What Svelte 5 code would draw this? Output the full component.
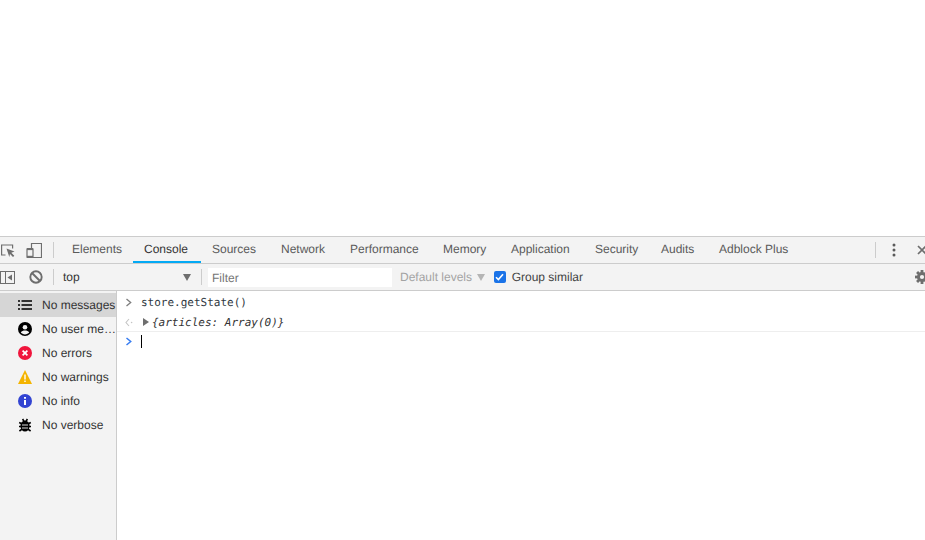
<script>
  const tabs = [
    { name: 'Elements', width: 72 },
    { name: 'Console', width: 68 },
    { name: 'Sources', width: 69 },
    { name: 'Network', width: 69 },
    { name: 'Performance', width: 93 },
    { name: 'Memory', width: 68 },
    { name: 'Application', width: 84 },
    { name: 'Security', width: 66 },
    { name: 'Audits', width: 58 },
    { name: 'Adblock Plus', width: 95 }
  ];
  const levels = [
    { label: 'No messages', icon: 'list', active: true },
    { label: 'No user me…', icon: 'user' },
    { label: 'No errors', icon: 'error' },
    { label: 'No warnings', icon: 'warning' },
    { label: 'No info', icon: 'info' },
    { label: 'No verbose', icon: 'bug' }
  ];
  const gearTeeth = [0, 45, 90, 135];
</script>

<div class="page">
  <div class="blank"></div>
  <div class="devtools">
    <div class="tabbar">
      <div class="tool-icons">
        <svg class="inspect" width="16" height="16" viewBox="0 0 16 16">
          <path d="M5.5 13H1.6V3h11v3.5" fill="none" stroke="#6e6e6e" stroke-width="1.2"/>
          <path d="M6.5 6.5l8 3-3.2 1.2 3 3-1.3 1.3-3-3L9.3 15z" fill="#6e6e6e"/>
        </svg>
        <svg class="device" width="16" height="16" viewBox="0 0 16 16">
          <path d="M5.5 6V1.5h10v14H6" fill="none" stroke="#6e6e6e" stroke-width="1.2"/>
          <rect x="1" y="6.5" width="6" height="9" rx="0.5" fill="none" stroke="#6e6e6e" stroke-width="1.2"/>
          <rect x="1" y="6.5" width="6" height="1.6" fill="#6e6e6e"/>
          <rect x="1" y="13.8" width="6" height="1.6" fill="#6e6e6e"/>
        </svg>
      </div>
      <span class="sep"></span>
      <div class="tabs">
        {#each tabs as tab}
          <div class="tab" class:selected={tab.name === 'Console'} style="width: {tab.width}px">{tab.name}</div>
        {/each}
      </div>
      <div class="tab-end">
        <span class="sep"></span>
        <svg class="dots" width="4" height="14" viewBox="0 0 4 14">
          <circle cx="2" cy="2" r="1.5" fill="#5a5a5a"/>
          <circle cx="2" cy="7" r="1.5" fill="#5a5a5a"/>
          <circle cx="2" cy="12" r="1.5" fill="#5a5a5a"/>
        </svg>
        <svg class="close" width="10" height="10" viewBox="0 0 10 10">
          <path d="M1 1l8 8M9 1l-8 8" stroke="#6e6e6e" stroke-width="1.7"/>
        </svg>
      </div>
    </div>

    <div class="toolbar">
      <svg class="sidebar-toggle" width="15" height="13" viewBox="0 0 15 13">
        <rect x="0.5" y="0.5" width="14" height="12" fill="none" stroke="#6e6e6e"/>
        <path d="M5.5 0v13" stroke="#6e6e6e"/>
        <path d="M12 3.5v6L7.5 6.5z" fill="#6e6e6e"/>
      </svg>
      <svg class="clear" width="14" height="14" viewBox="0 0 14 14">
        <circle cx="7" cy="7" r="5.7" fill="none" stroke="#6e6e6e" stroke-width="1.9"/>
        <path d="M3 3l8 8" stroke="#6e6e6e" stroke-width="1.9"/>
      </svg>
      <span class="sep first-sep"></span>
      <div class="context">
        <span>top</span>
        <span class="arrow"></span>
      </div>
      <span class="sep"></span>
      <div class="filter">Filter</div>
      <div class="default-levels">Default levels <span class="arrow light"></span></div>
      <label class="group">
        <span class="check">
          <svg width="9" height="8" viewBox="0 0 9 8"><path d="M1 4.2l2.4 2.4L8 1.2" fill="none" stroke="#fff" stroke-width="1.6"/></svg>
        </span>
        Group similar
      </label>
      <svg class="gear" width="14" height="14" viewBox="0 0 14 14">
        {#each gearTeeth as angle}
          <rect x="5.6" y="0" width="2.8" height="14" fill="#6e6e6e" transform="rotate({angle} 7 7)"/>
        {/each}
        <circle cx="7" cy="7" r="5" fill="#6e6e6e"/>
        <circle cx="7" cy="7" r="2.1" fill="#f3f3f3"/>
      </svg>
    </div>

    <div class="main">
      <div class="sidebar">
        {#each levels as level}
          <div class="level" class:active={level.active}>
            <span class="level-icon">
              {#if level.icon === 'list'}
                <svg width="14" height="10" viewBox="0 0 14 10">
                  <path d="M0 1h2M3.5 1H14M0 5h2M3.5 5H14M0 9h2M3.5 9H14" stroke="#333" stroke-width="1.8"/>
                </svg>
              {:else if level.icon === 'user'}
                <svg width="14" height="14" viewBox="0 0 14 14">
                  <circle cx="7" cy="7" r="7" fill="#000"/>
                  <circle cx="7" cy="5.2" r="2.3" fill="#f3f3f3"/>
                  <path d="M2.8 10.6C3.6 9 5.4 8.5 7 8.5s3.4.5 4.2 2.1C10.2 11.7 8.7 12.4 7 12.4s-3.2-.7-4.2-1.8z" fill="#f3f3f3"/>
                </svg>
              {:else if level.icon === 'error'}
                <svg width="14" height="14" viewBox="0 0 14 14">
                  <circle cx="7" cy="7" r="7" fill="#f0153c"/>
                  <path d="M4.6 4.6l4.8 4.8M9.4 4.6L4.6 9.4" stroke="#fff" stroke-width="1.7"/>
                </svg>
              {:else if level.icon === 'warning'}
                <svg width="14" height="14" viewBox="0 0 14 14">
                  <path d="M7 0L14 14H0z" fill="#f4b400"/>
                  <path d="M6.3 4.5h1.4v5H6.3zM6.3 10.6h1.4V12H6.3z" fill="#fff"/>
                </svg>
              {:else if level.icon === 'info'}
                <svg width="14" height="14" viewBox="0 0 14 14">
                  <circle cx="7" cy="7" r="7" fill="#3244d2"/>
                  <path d="M6 3h2v1.8H6zM6 6h2v5H6z" fill="#fff"/>
                </svg>
              {:else}
                <svg width="14" height="14" viewBox="0 0 14 14">
                  <path d="M4.6 1l1.4 2.4M9.4 1L8 3.4M1.2 4.5l3 1.5M12.8 4.5l-3 1.5M1 8.5h3M13 8.5h-3M1.4 13l3-2.2M12.6 13l-3-2.2" stroke="#000" stroke-width="1.6"/>
                  <ellipse cx="7" cy="8" rx="4.6" ry="5.6" fill="#000"/>
                  <path d="M4 7h6M4 10h6" stroke="#f3f3f3" stroke-width="0.9"/>
                </svg>
              {/if}
            </span>
            <span class="level-label">{level.label}</span>
          </div>
        {/each}
      </div>

      <div class="console">
        <div class="message">
          <svg class="prompt" width="7" height="9" viewBox="0 0 7 9"><path d="M1 1l4.2 3.5L1 8" fill="none" stroke="#7d7d7d" stroke-width="1.3"/></svg>
          <span class="code">store.getState()</span>
        </div>
        <div class="message result">
          <svg class="prompt" width="8" height="9" viewBox="0 0 8 9"><path d="M4 1L1 4.5 4 8" fill="none" stroke="#c4c4c4" stroke-width="1.1"/><circle cx="6.6" cy="4.5" r="0.8" fill="#c4c4c4"/></svg>
          <span class="expand"></span>
          <span class="code object">&#123;articles: Array(0)&#125;</span>
        </div>
        <div class="message input">
          <svg class="prompt" width="7" height="9" viewBox="0 0 7 9"><path d="M1 1l4.2 3.5L1 8" fill="none" stroke="#367cf1" stroke-width="1.5"/></svg>
          <span class="caret"></span>
        </div>
      </div>
    </div>
  </div>
</div>

<style>
  :global(body) {
    background: #fff;
    overflow: hidden;
  }

  .page {
    display: flex;
    flex-direction: column;
    height: 540px;
    font-family: "Liberation Sans", Arial, sans-serif;
    font-size: 12px;
    color: #333;
    text-rendering: geometricPrecision;
  }

  .blank {
    height: 236px;
    flex: none;
  }

  .devtools {
    flex: 1;
    display: flex;
    flex-direction: column;
    min-height: 0;
    overflow: hidden;
  }

  .tabbar {
    flex: none;
    height: 26px;
    display: flex;
    align-items: center;
    background: #f3f3f3;
    border-top: 1px solid #ccc;
    border-bottom: 1px solid #ccc;
  }

  .tool-icons {
    display: flex;
    align-items: center;
    gap: 10px;
    width: 53px;
    flex: none;
  }

  .device {
    margin-top: -1px;
  }

  .sep {
    display: block;
    width: 1px;
    height: 16px;
    background: #ccc;
    flex: none;
  }

  .tabs {
    display: flex;
    height: 100%;
    margin-left: 7px;
  }

  .tab {
    padding-left: 11px;
    line-height: 25px;
    height: 26px;
    box-sizing: border-box;
    color: #5a5a5a;
    white-space: nowrap;
    flex: none;
  }

  .tab.selected {
    color: #333;
    border-bottom: 2px solid #03a9f4;
  }

  .tab-end {
    margin-left: auto;
    display: flex;
    align-items: center;
    flex: none;
    width: 50px;
  }

  .dots {
    margin-left: 16px;
    flex: none;
  }

  .close {
    margin-left: 21px;
    flex: none;
  }

  .toolbar {
    flex: none;
    height: 26px;
    display: flex;
    align-items: center;
    background: #f3f3f3;
    border-bottom: 1px solid #ccc;
  }

  .sidebar-toggle {
    flex: none;
  }

  .clear {
    flex: none;
    margin-left: 14px;
  }

  .first-sep {
    margin-left: 10px;
  }

  .context {
    width: 147px;
    box-sizing: border-box;
    padding: 0 10px 0 9px;
    display: flex;
    align-items: center;
    justify-content: space-between;
    color: #333;
    flex: none;
  }

  .arrow {
    width: 0;
    height: 0;
    border-left: 4px solid transparent;
    border-right: 4px solid transparent;
    border-top: 7px solid #6e6e6e;
    display: inline-block;
  }

  .arrow.light {
    border-top-color: #b5b5b5;
    margin-left: 1.3px;
  }

  .filter {
    margin-left: 6px;
    width: 184px;
    height: 19px;
    line-height: 20px;
    box-sizing: border-box;
    padding-left: 4px;
    background: #fff;
    color: #757575;
    flex: none;
  }

  .default-levels {
    margin-left: 8px;
    color: #a3a3a3;
    white-space: nowrap;
    flex: none;
  }

  .group {
    margin-left: 9px;
    display: flex;
    align-items: center;
    gap: 6px;
    color: #444;
    flex: none;
  }

  .check {
    width: 12px;
    height: 12px;
    border-radius: 2px;
    background: #1a73e8;
    display: flex;
    align-items: center;
    justify-content: center;
  }

  .gear {
    margin-left: auto;
    margin-right: -4px;
    flex: none;
  }

  .main {
    flex: 1;
    display: flex;
    min-height: 0;
  }

  .sidebar {
    width: 117px;
    flex: none;
    box-sizing: border-box;
    background: #f3f3f3;
    border-right: 1px solid #ccc;
    padding-top: 2px;
  }

  .level {
    height: 24px;
    display: flex;
    align-items: center;
    color: #333;
    white-space: nowrap;
  }

  .level.active {
    background: #d6d6d6;
  }

  .level-icon {
    width: 42px;
    padding-left: 18px;
    box-sizing: border-box;
    display: flex;
    align-items: center;
    flex: none;
  }

  .console {
    flex: 1;
    min-width: 0;
    background: #fff;
    padding-top: 1px;
  }

  .message {
    height: 20px;
    display: flex;
    align-items: center;
    padding-left: 8px;
    box-sizing: border-box;
  }

  .message .prompt {
    flex: none;
    width: 8px;
  }

  .code {
    font-family: "DejaVu Sans Mono", "Liberation Mono", monospace;
    font-size: 11px;
    color: #303942;
    margin-left: 8px;
    white-space: pre;
  }

  .result {
    border-bottom: 1px solid #eee;
    padding-top: 1px;
  }

  .input {
    height: 18px;
  }

  .expand {
    width: 0;
    height: 0;
    border-top: 4px solid transparent;
    border-bottom: 4px solid transparent;
    border-left: 6px solid #6e6e6e;
    margin-left: 10px;
    flex: none;
  }

  .object {
    font-style: italic;
    margin-left: 3px;
    color: #333;
  }

  .caret {
    width: 1px;
    height: 13px;
    background: #000;
    margin-left: 8px;
  }
</style>
